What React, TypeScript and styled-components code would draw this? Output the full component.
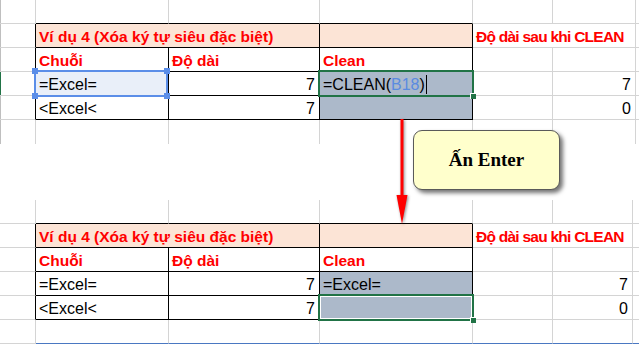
import React from "react";
import styled, { createGlobalStyle, css } from "styled-components";

const GlobalStyle = createGlobalStyle`
  html, body {
    margin: 0;
    padding: 0;
    background: #ffffff;
  }
  body {
    font-family: "Liberation Sans", Arial, sans-serif;
  }
`;

const GRID = "#d4d4d4";
const INK = "#000000";
const RED = "#ff0000";
const PEACH = "#fce4d6";
const SLATE = "#acb9ca";
const EXCEL_GREEN = "#217346";
const REF_BLUE = "#5b8ee8";

const Page = styled.div`
  position: relative;
  width: 639px;
  height: 346px;
  overflow: hidden;
  background: #fff;
`;

const Sheet = styled.div<{ $last: number }>`
  display: grid;
  grid-template-columns: 36px 133px 151px 153px 80px ${(p) => p.$last}px 1fr;
  grid-auto-rows: 24px;
`;

const Gap = styled.div`
  height: 56px;
`;

interface CellProps {
  $r?: string;
  $b?: string;
  $bg?: string;
  $span?: number;
  $bold?: boolean;
  $red?: boolean;
  $right?: boolean;
  $tight?: boolean;
  $edge?: string;
}

const Cell = styled.div<CellProps>`
  position: relative;
  box-sizing: border-box;
  border-right: 1px solid ${(p) => p.$r ?? GRID};
  border-bottom: 1px solid ${(p) => p.$b ?? GRID};
  background: ${(p) => p.$bg ?? "transparent"};
  grid-column: span ${(p) => p.$span ?? 1};
  padding: 3px 4px 0 3px;
  font-size: ${(p) => (p.$bold ? "15.5px" : "16px")};
  line-height: 20px;
  white-space: nowrap;
  color: ${(p) => (p.$red ? RED : "#000")};
  font-weight: ${(p) => (p.$bold ? 700 : 400)};
  text-align: ${(p) => (p.$right ? "right" : "left")};
  letter-spacing: ${(p) => (p.$tight ? "-0.75px" : "normal")};
  ${(p) =>
    p.$edge &&
    css`
      box-shadow: inset 1px 0 0 ${p.$edge};
    `}
`;

const BottomCell = styled(Cell)`
  border-bottom: none;
`;

const BlueFrame = styled.div`
  position: absolute;
  left: -2px;
  top: -2px;
  right: 0px;
  bottom: -2px;
  border: 2px solid ${REF_BLUE};
  background: #e9eff9;
  z-index: 1;
`;

const BlueText = styled.span`
  position: relative;
  z-index: 2;
`;

const Handle = styled.span<{ $x: "l" | "r"; $y: "t" | "b" }>`
  position: absolute;
  width: 6px;
  height: 6px;
  background: ${REF_BLUE};
  ${(p) => (p.$x === "l" ? "left: -4px;" : "right: -4px;")}
  ${(p) => (p.$y === "t" ? "top: -4px;" : "bottom: -4px;")}
`;

const GreenFrame = styled.div<{ $inner?: boolean }>`
  position: absolute;
  left: -2px;
  top: -2px;
  right: -2px;
  bottom: -2px;
  border: 2px solid ${EXCEL_GREEN};
  z-index: 1;
  ${(p) =>
    p.$inner &&
    css`
      box-shadow: inset 0 0 0 1px #ffffff;
    `}
`;

const FillHandle = styled.span`
  position: absolute;
  right: -4px;
  bottom: -4px;
  width: 5px;
  height: 5px;
  background: ${EXCEL_GREEN};
  border-left: 1px solid #fff;
  border-top: 1px solid #fff;
`;

const FormulaText = styled.span`
  position: relative;
  z-index: 2;
`;

const RefPart = styled.span`
  color: #5a8be0;
`;

const Caret = styled.span`
  display: inline-block;
  width: 1px;
  height: 19px;
  margin-left: 1px;
  vertical-align: -4px;
  background: #000;
`;

const Callout = styled.div`
  position: absolute;
  left: 413px;
  top: 130px;
  width: 147px;
  height: 60px;
  box-sizing: border-box;
  border: 1px solid #5a5a5a;
  border-radius: 9px;
  background: #ffffcc;
  box-shadow: 3px 3px 4px rgba(0, 0, 0, 0.55);
  display: flex;
  align-items: center;
  justify-content: center;
  font-family: "Liberation Serif", "Times New Roman", serif;
  font-weight: 700;
  font-size: 19px;
  color: #000;
`;

const ArrowSvg = styled.svg`
  position: absolute;
  left: 394px;
  top: 119px;
  overflow: visible;
  filter: drop-shadow(1px 1px 1.5px rgba(0, 0, 0, 0.45));
`;

const Arrow = () => (
  <ArrowSvg width="16" height="106" viewBox="0 0 16 106">
    <rect x="6.5" y="0" width="3" height="80" fill={RED} />
    <path d="M2.5 76 L13.5 76 L8 105 Z" fill={RED} />
  </ArrowSvg>
);

type Variant = "before" | "after";

const Block = ({ variant }: { variant: Variant }) => {
  const before = variant === "before";
  const edgeGrey = before ? "#bfbfbf" : undefined;
  return (
    <Sheet $last={before ? 83 : 80}>
      {/* row above the table */}
      <Cell $edge={edgeGrey} />
      <Cell $b={INK} />
      <Cell $b={INK} />
      <Cell $b={INK} />
      <Cell />
      <Cell />
      <Cell />

      {/* title row */}
      <Cell $r={INK} $edge={edgeGrey} />
      <Cell $span={2} $r={INK} $b={INK} $bg={PEACH} $bold $red>
        Ví dụ 4 (Xóa ký tự siêu đặc biệt)
      </Cell>
      <Cell $r={INK} $b={INK} $bg={PEACH} />
      <Cell $span={2} $bold $red $tight>
        Độ dài sau khi CLEAN
      </Cell>
      <Cell />

      {/* header row */}
      <Cell $r={INK} $edge={edgeGrey} />
      <Cell $r={INK} $b={INK} $bold $red>
        Chuỗi
      </Cell>
      <Cell $r={INK} $b={INK} $bold $red>
        Độ dài
      </Cell>
      <Cell $r={INK} $b={INK} $bold $red>
        Clean
      </Cell>
      <Cell />
      <Cell />
      <Cell />

      {/* first data row */}
      <Cell $r={INK} $edge={before ? EXCEL_GREEN : undefined} />
      <Cell $r={INK} $b={INK}>
        {before ? (
          <>
            <BlueFrame>
              <Handle $x="l" $y="t" />
              <Handle $x="r" $y="t" />
              <Handle $x="l" $y="b" />
              <Handle $x="r" $y="b" />
            </BlueFrame>
            <BlueText>=Excel=</BlueText>
          </>
        ) : (
          "=Excel="
        )}
      </Cell>
      <Cell $r={INK} $b={INK} $right>
        7
      </Cell>
      <Cell $r={INK} $b={INK} $bg={SLATE}>
        {before ? (
          <>
            <GreenFrame>
              <FillHandle />
            </GreenFrame>
            <FormulaText>
              =CLEAN(<RefPart>B18</RefPart>)<Caret />
            </FormulaText>
          </>
        ) : (
          "=Excel="
        )}
      </Cell>
      <Cell />
      <Cell $right>7</Cell>
      <Cell />

      {/* second data row */}
      <Cell $r={INK} $edge={edgeGrey} />
      <Cell $r={INK} $b={INK}>
        &lt;Excel&lt;
      </Cell>
      <Cell $r={INK} $b={INK} $right>
        7
      </Cell>
      <Cell $r={INK} $b={INK} $bg={SLATE}>
        {!before && (
          <GreenFrame $inner>
            <FillHandle />
          </GreenFrame>
        )}
      </Cell>
      <Cell />
      <Cell $right>0</Cell>
      <Cell />

      {/* row below the table */}
      {before ? (
        <>
          <BottomCell $edge={edgeGrey} />
          <BottomCell />
          <BottomCell />
          <BottomCell />
          <BottomCell />
          <BottomCell />
          <BottomCell />
        </>
      ) : (
        <>
          <Cell />
          <Cell $b="#4a78c2" />
          <Cell $b="#4a78c2" />
          <Cell $b="#4a78c2" />
          <Cell $b="#4a78c2" />
          <Cell $b="#4a78c2" />
          <Cell $b="#4a78c2" />
        </>
      )}
    </Sheet>
  );
};

export default function App() {
  return (
    <>
      <GlobalStyle />
      <Page>
        <Block variant="before" />
        <Gap />
        <Block variant="after" />
        <Arrow />
        <Callout>Ấn Enter</Callout>
      </Page>
    </>
  );
}
